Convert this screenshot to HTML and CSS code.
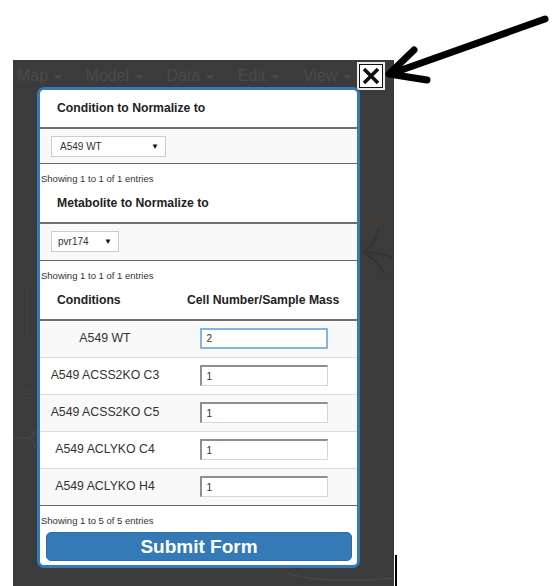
FILE: index.html
```html
<!DOCTYPE html>
<html lang="en">

<head>
    <meta charset="UTF-8">
    <meta name="viewport" content="width=device-width, initial-scale=1.0">
    <title>Normalize</title>
    <link rel="stylesheet" href="styles.css">
</head>

<body>

    <div class="stage">
        <div class="panel">
            <!-- faint map behind the dialog -->
            <svg class="map" width="381" height="526" viewBox="0 0 381 526">
                <path d="M14 168 h22 M14 172 h22 M14 176 h22" stroke="#444" stroke-width="1" stroke-dasharray="2 1" />
                <path d="M14 228 v48 M14 252 h10 M14 276 h10" stroke="#444" fill="none" />
                <path d="M8 330 h12 M8 334 h12 M8 338 h12" stroke="#444" stroke-dasharray="2 1" />
                <path d="M0 378 h14 q6 0 8 -8 M14 378 q6 0 8 10" stroke="#464646" fill="none" stroke-width="1.5" />
                <circle cx="366" cy="162" r="6" fill="#433a36" />
                <path d="M366 168 q-2 14 -16 24 M350 192 q16 0 31 6 M350 192 q14 8 22 22" stroke="#333" fill="none" stroke-width="1.5" />
                <circle cx="270" cy="512" r="5" fill="#433a36" />
                <path d="M275 514 q40 10 106 4" stroke="#464646" fill="none" stroke-width="1.5" />
            </svg>

            <div class="menu">
                <span>Map <i class="caret"></i></span>
                <span>Model <i class="caret"></i></span>
                <span>Data <i class="caret"></i></span>
                <span>Edit <i class="caret"></i></span>
                <span>View <i class="caret"></i></span>
            </div>

            <div class="close-btn">
                <div class="close-inner">
                    <svg width="20" height="20" viewBox="0 0 20 20">
                        <path d="M3 3 L17 17 M17 3 L3 17" stroke="#111" stroke-width="3.6" />
                    </svg>
                </div>
            </div>

            <div class="modal">
                <table class="dt">
                    <thead>
                        <tr><th>Condition to Normalize to</th></tr>
                    </thead>
                    <tbody>
                        <tr class="odd">
                            <td class="pick">
                                <div class="select-box wide"><span>A549 WT</span><span class="arrow">&#9660;</span></div>
                            </td>
                        </tr>
                    </tbody>
                </table>
                <div class="dt-info">Showing 1 to 1 of 1 entries</div>

                <table class="dt">
                    <thead>
                        <tr><th>Metabolite to Normalize to</th></tr>
                    </thead>
                    <tbody>
                        <tr class="odd">
                            <td class="pick tall">
                                <div class="select-box narrow"><span>pvr174</span><span class="arrow">&#9660;</span></div>
                            </td>
                        </tr>
                    </tbody>
                </table>
                <div class="dt-info">Showing 1 to 1 of 1 entries</div>

                <table class="dt fixed">
                    <colgroup>
                        <col class="col-cond">
                        <col>
                    </colgroup>
                    <thead>
                        <tr>
                            <th>Conditions</th>
                            <th>Cell Number/Sample Mass</th>
                        </tr>
                    </thead>
                    <tbody>
                        <tr class="odd">
                            <td>A549 WT</td>
                            <td><input type="text" class="focus" value="2"></td>
                        </tr>
                        <tr>
                            <td>A549 ACSS2KO C3</td>
                            <td><input type="text" value="1"></td>
                        </tr>
                        <tr class="odd">
                            <td>A549 ACSS2KO C5</td>
                            <td><input type="text" value="1"></td>
                        </tr>
                        <tr>
                            <td>A549 ACLYKO C4</td>
                            <td><input type="text" value="1"></td>
                        </tr>
                        <tr class="odd">
                            <td>A549 ACLYKO H4</td>
                            <td><input type="text" value="1"></td>
                        </tr>
                    </tbody>
                </table>
                <div class="dt-info">Showing 1 to 5 of 5 entries</div>

                <button class="submit">Submit Form</button>
            </div>
        </div>
    </div>

    <!-- annotation arrow -->
    <svg class="pointer" width="558" height="120" viewBox="0 0 558 120">
        <path d="M545 19 L393 73" stroke="#000" stroke-width="7" stroke-linecap="round" />
        <path d="M414 50 L389 74 L427 80" stroke="#000" stroke-width="7" fill="none" stroke-linecap="round" stroke-linejoin="round" />
    </svg>
    <div class="edge-mark"></div>

</body>

</html>
```

FILE: styles.css
```css
body {
    margin: 0;
    width: 558px;
    height: 586px;
    overflow: hidden;
    position: relative;
    background: #fff;
    font-family: "Liberation Sans", Arial, sans-serif;
    color: #333;
}

.stage {
    padding: 60px 0 0 13px;
}

.panel {
    position: relative;
    width: 381px;
    height: 526px;
    background-color: #3b3b3b;
}

.map {
    position: absolute;
    left: 0;
    top: 0;
}

.menu {
    display: flex;
    gap: 24px;
    padding: 6px 0 0 4px;
    font-size: 16px;
    line-height: 20px;
    color: #4a4a4a;
}

.caret {
    display: inline-block;
    width: 0;
    height: 0;
    margin-left: 1px;
    vertical-align: middle;
    border-top: 4px solid #4a4a4a;
    border-left: 4px solid transparent;
    border-right: 4px solid transparent;
}

.close-btn {
    position: absolute;
    left: 344px;
    top: 2px;
    width: 28px;
    height: 28px;
    box-sizing: border-box;
    padding: 2px;
    background: #ececec;
}

.close-inner {
    width: 24px;
    height: 24px;
    box-sizing: border-box;
    border: 1px solid #111;
    background: #fff;
    display: flex;
    align-items: center;
    justify-content: center;
}

.modal {
    position: absolute;
    left: 24px;
    top: 27px;
    width: 323px;
    box-sizing: border-box;
    border: 3px solid #337ab7;
    border-radius: 7px;
    background: #fff;
    padding-bottom: 4px;
}

.dt {
    width: 100%;
    border-collapse: separate;
    border-spacing: 0;
}

.dt.fixed {
    table-layout: fixed;
}

.dt col.col-cond {
    width: 130px;
}

.dt th {
    text-align: left;
    padding: 12px 17px;
    font-size: 12.2px;
    line-height: 13px;
    font-weight: bold;
    color: #222;
    white-space: nowrap;
    border-bottom: 2px solid #6e6e6e;
}

.dt td {
    height: 21px;
    padding: 7px 0 8px;
    text-align: center;
    font-size: 12.3px;
    line-height: 21px;
    white-space: nowrap;
    border-bottom: 1px solid #ddd;
}

.dt tr:last-child td {
    border-bottom: 1px solid #666;
}

.dt tr.odd td {
    background-color: #f9f9f9;
}

.dt td.pick {
    padding: 7px 11px 6px;
    text-align: left;
}

.dt td.pick.tall {
    padding-bottom: 8px;
}

.select-box {
    display: flex;
    justify-content: space-between;
    align-items: center;
    height: 21px;
    box-sizing: border-box;
    padding: 0 6px 0 8px;
    border: 1px solid #ccc;
    background: #fff;
    font-size: 10px;
    color: #333;
}

.select-box.wide {
    width: 115px;
}

.select-box.narrow {
    width: 68px;
    padding-left: 6px;
}

.select-box .arrow {
    font-size: 8px;
    color: #111;
}

.dt-info {
    padding-top: 9px;
    padding-left: 1px;
    font-size: 9.5px;
    line-height: 12px;
    color: #333;
}

.dt input {
    display: block;
    width: 128px;
    height: 21px;
    margin: 0 auto;
    box-sizing: border-box;
    padding: 0 0 0 5px;
    font-family: "Liberation Sans", Arial, sans-serif;
    font-size: 10px;
    color: #333;
    background: #fff;
    border: 1px solid #d6d6d6;
    border-top: 2px solid #8f8f8f;
    border-left: 2px solid #8f8f8f;
    outline: none;
}

.dt input.focus {
    border: 2px solid #86b3e6;
}

.submit {
    display: block;
    width: 306px;
    height: 29px;
    margin: 5px 0 0 6px;
    padding: 0;
    border: 1px solid #2e6da4;
    border-radius: 5px;
    background-color: #337ab7;
    color: #fff;
    font-family: "Liberation Sans", Arial, sans-serif;
    font-size: 19px;
    font-weight: bold;
}

.pointer {
    position: absolute;
    left: 0;
    top: 0;
}

.edge-mark {
    position: absolute;
    left: 395px;
    top: 555px;
    width: 2px;
    height: 31px;
    background: #000;
}
```
